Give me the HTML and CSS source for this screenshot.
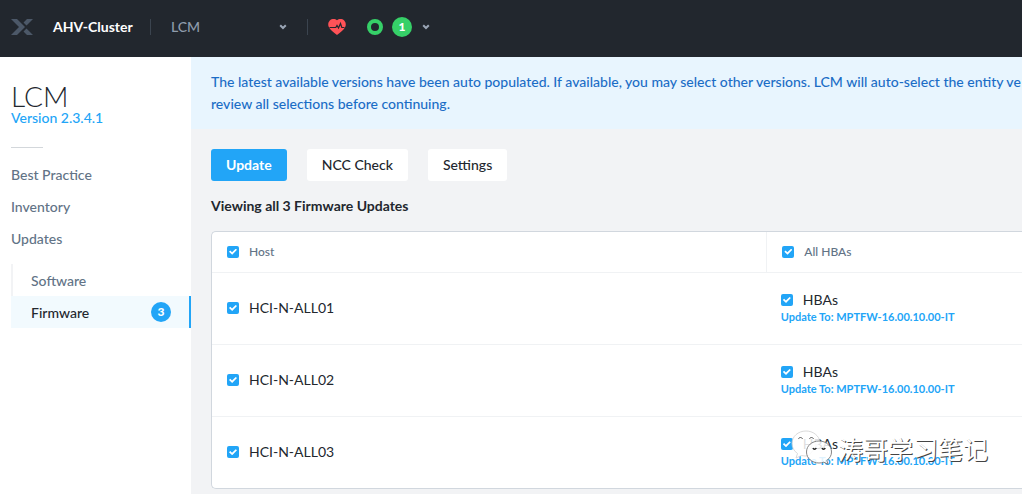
FILE: index.html
```html
<!DOCTYPE html>
<html lang="en">
<head>
<meta charset="utf-8">
<title>LCM - AHV-Cluster</title>
<link rel="stylesheet" href="styles.css">
</head>
<body>
<header class="topbar">
  <svg class="logo" viewBox="0 0 22 16" aria-hidden="true"><path fill="#4c5868" d="M0 0h6l8 8-8 8H0l8-8zM16 0h6l-6.500 6.500-3-3zM12.500 12.500l3-3L22 16h-6z"/></svg>
  <strong class="cluster">AHV-Cluster</strong>
  <button class="picker" type="button"><span>LCM</span>
    <svg class="chevron" viewBox="0 0 8 6" aria-hidden="true"><path d="M1.200 1.200L4 4l2.800-2.800"/></svg>
  </button>
  <div class="status">
    <svg class="heart" viewBox="0 0 18 16" aria-hidden="true"><path fill="#ff5257" d="M9 1.300C7.300-.3 3.800-.5 1.800 1.500.2 3.200-.2 5.600.7 7.800 2 11 5.500 13.500 9 16c3.500-2.500 7-5 8.300-8.200.9-2.200.5-4.600-1.100-6.300-2-2-5.500-1.800-7.200-.2z"/><path fill="none" stroke="#22272e" stroke-width="1.200" d="M1.500 8.500h6.300l1.200-2 1.500 2.500 2-4.500 1.300 4h2.700"/></svg>
    <span class="ring"></span>
    <span class="count count-ok">1</span>
    <svg class="chevron" viewBox="0 0 8 6" aria-hidden="true"><path d="M1.200 1.200L4 4l2.800-2.800"/></svg>
  </div>
</header>
<div class="layout">
  <aside class="sidebar">
    <h1 class="title">LCM</h1>
    <a class="version" href="#">Version 2.3.4.1</a>
    <hr class="rule">
    <nav class="nav">
      <a href="#">Best Practice</a>
      <a href="#">Inventory</a>
      <a href="#">Updates</a>
      <div class="subnav">
        <a href="#">Software</a>
        <a class="active" href="#">Firmware <span class="count count-info">3</span></a>
      </div>
    </nav>
  </aside>
  <main class="main">
    <p class="banner">The latest available versions have been auto populated. If available, you may select other versions. LCM will auto-select the entity ve<br>review all selections before continuing.</p>
    <div class="content">
      <div class="actions">
        <button class="btn btn-primary" type="button">Update</button>
        <button class="btn" type="button">NCC Check</button>
        <button class="btn" type="button">Settings</button>
      </div>
      <h2 class="summary">Viewing all 3 Firmware Updates</h2>
      <div class="panel">
        <table class="hosts">
          <thead>
            <tr>
              <th class="col-host"><label class="check"><input type="checkbox" checked>Host</label></th>
              <th class="col-hba"><label class="check"><input type="checkbox" checked>All HBAs</label></th>
            </tr>
          </thead>
          <tbody>
            <tr>
              <td><label class="check"><input type="checkbox" checked>HCI-N-ALL01</label></td>
              <td><label class="check"><input type="checkbox" checked>HBAs</label><a class="target" href="#">Update To: MPTFW-16.00.10.00-IT</a></td>
            </tr>
            <tr>
              <td><label class="check"><input type="checkbox" checked>HCI-N-ALL02</label></td>
              <td><label class="check"><input type="checkbox" checked>HBAs</label><a class="target" href="#">Update To: MPTFW-16.00.10.00-IT</a></td>
            </tr>
            <tr>
              <td><label class="check"><input type="checkbox" checked>HCI-N-ALL03</label></td>
              <td><label class="check"><input type="checkbox" checked>HBAs</label><a class="target" href="#">Update To: MPTFW-16.00.10.00-IT</a></td>
            </tr>
          </tbody>
        </table>
        <div class="watermark">
          <svg class="bubbles" viewBox="0 0 42 36" aria-hidden="true">
            <path fill="#fff" fill-opacity=".85" stroke="#d0d0d0" stroke-width=".8" d="M15 1C7 1 1 6.500 1 13.500c0 4 2 7.500 5.500 10L5 28l5.500-2.500c2 .5 5 .7 7 .4L29 12C28 5.500 22 1 15 1z"/>
            <path fill="#fff" fill-opacity=".85" stroke="#777" stroke-width=".9" d="M28 11c-7 0-12.500 4.700-12.500 11S21 33 28 33c1.700 0 3.300-.3 4.800-.8l4.200 2-1.200-3.800c3-2 4.700-5 4.700-8.400C40.500 15.700 35 11 28 11z"/>
            <path fill="none" stroke="#555" d="M7.500 9c.5-2 3.500-2 4 0M18.500 9c.5-2 3.500-2 4 0"/>
            <path fill="none" stroke="#222" stroke-width="1.500" d="M22 18c.5 1.500 2.500 1.500 3.200 0M31 18c.5 1.500 2.500 1.500 3.200 0"/>
          </svg>
          <span>涛哥学习笔记</span>
        </div>
      </div>
    </div>
  </main>
</div>
</body>
</html>
```
FILE: styles.css
```css
* { box-sizing: border-box; }
body {
  margin: 0;
  min-height: 100vh;
  display: flex;
  flex-direction: column;
  font: 500 14px/22px Lato, "Noto Sans CJK SC", sans-serif;
  color: #22272e;
  background: #f2f3f5;
  overflow-x: hidden;
}
a { color: inherit; text-decoration: none; }
button { font: inherit; border: 0; cursor: pointer; }

.topbar {
  display: flex;
  align-items: center;
  height: 57px;
  padding: 0 11px 3px;
  background: #22272e;
}
.logo { width: 22px; height: 16px; }
.cluster { width: 97px; margin-left: 20px; color: #fff; }
.picker {
  display: flex;
  align-items: center;
  justify-content: space-between;
  width: 158px;
  height: 16px;
  padding: 0 20px;
  color: #8f9bab;
  background: none;
  border-left: 1px solid #3b444f;
  border-right: 1px solid #3b444f;
}
.chevron { width: 8px; height: 6px; fill: none; stroke: #9aa5b5; stroke-width: 2; }
.status { display: flex; align-items: center; padding-left: 20px; }
.heart { width: 18px; height: 16px; margin-right: 21px; }
.ring { width: 16px; height: 16px; margin-right: 9px; border: 4px solid #36d068; border-radius: 50%; }
.count {
  width: 20px;
  height: 20px;
  border-radius: 50%;
  color: #fff;
  font-size: 12px;
  font-weight: 900;
  line-height: 20px;
  text-align: center;
}
.count-ok { margin-right: 10px; background: #36d068; }
.count-info { background: #22a5f7; }

.layout { flex: 1; display: flex; }
.sidebar { flex: none; width: 191px; padding-top: 26px; background: #fff; }
.title { margin: 0; padding-left: 11px; font-size: 28px; font-weight: 300; line-height: 27px; }
.version { display: block; padding-left: 11px; line-height: 16px; color: #22a5f7; }
.rule { width: 32px; height: 1px; margin: 21px 11px 11px; border: 0; background: #d3d7db; }
.nav { line-height: 32px; color: #627386; }
.nav > a { display: block; padding-left: 11px; }
.subnav { margin: 9px 0 0 11px; border-left: 2px solid #f2f3f5; line-height: 34px; }
.subnav a { display: flex; align-items: flex-start; justify-content: space-between; height: 32px; padding: 0 20px 0 18px; }
.subnav .active { margin-left: -2px; padding: 0 18px 0 20px; color: #22272e; background: #f2fafe; border-right: 2px solid #22a5f7; }
.subnav .count { margin-top: 6px; }

.main { flex: 1; min-width: 0; }
.banner {
  margin: 0;
  padding: 14px 0 14px 20px;
  color: #1b6dc6;
  background: #e8f5fe;
  white-space: nowrap;
  overflow: hidden;
}
.content { padding: 20px 0 5px 20px; }
.actions { display: flex; gap: 20px; }
.btn { height: 32px; padding: 0 15px; border-radius: 3px; color: #22272e; background: #fff; }
.btn-primary { color: #fff; font-weight: 700; background: #22a5f7; }
.summary { margin: 14px 0; font-size: 14px; font-weight: 700; line-height: 22px; }

.panel { position: relative; border: 1px solid #d1d7de; border-right: 0; border-radius: 5px 0 0 5px; background: #fff; }
.hosts { width: 100%; table-layout: fixed; border-collapse: collapse; }
.hosts th { height: 40px; padding: 0 15px; font-size: 12px; font-weight: 500; text-align: left; color: #627386; }
.col-host { width: 68.5%; }
.col-hba { border-left: 1px solid #f0f2f4; }
.hosts td { height: 72px; padding: 0 15px; border-top: 1px solid #f0f2f4; font-weight: 400; }
.hosts td:last-child { padding: 0 14px; }
.check { display: flex; align-items: center; gap: 10px; line-height: 18px; }
.check input {
  appearance: none;
  flex: none;
  display: grid;
  place-items: center;
  width: 12px;
  height: 12px;
  margin: 0;
  border-radius: 2px;
  background: #22a5f7;
}
.check input::before {
  content: "";
  width: 8px;
  height: 6px;
  background: #fff;
  clip-path: polygon(0 50%, 16% 30%, 38% 58%, 84% 0, 100% 18%, 40% 100%);
}
.target { display: block; font-size: 11px; font-weight: 700; line-height: 16px; color: #22a5f7; }

.watermark {
  position: absolute;
  right: 34px;
  bottom: 22px;
  display: flex;
  align-items: center;
  gap: 5px;
  font: 400 25px/36px "Noto Sans CJK SC", sans-serif;
  color: #fff;
  text-shadow: 1px 1px 0 #444;
}
.bubbles { width: 42px; height: 36px; }
```
